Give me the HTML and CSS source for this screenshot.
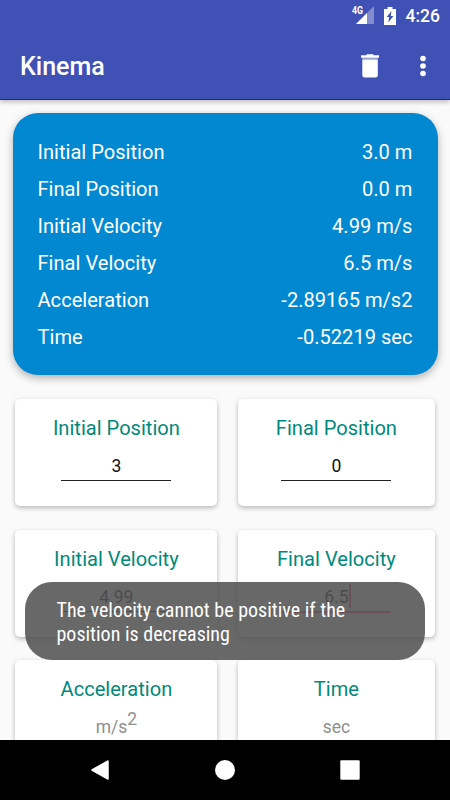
FILE: index.html
```html
<!DOCTYPE html>
<html lang="en">

<head>
    <meta charset="UTF-8">
    <meta name="viewport" content="width=device-width, initial-scale=1.0">
    <title>Kinema</title>
    <link rel="stylesheet" href="styles.css">
</head>

<body>
    <div class="phone">
        <header class="header">
            <div class="status">
                <svg class="signal" width="23" height="20" viewBox="0 0 23 20">
                    <path d="M22 1v18H4z" fill="#fff" fill-opacity=".35" />
                    <path d="M15 8v11H4z" fill="#fff" />
                    <path d="M0 0h12v9l-2 2H0z" fill="#3f51b5" />
                    <text x="0" y="9" textLength="11" lengthAdjust="spacingAndGlyphs">4G</text>
                </svg>
                <svg class="battery" width="12" height="18" viewBox="0 0 12 18">
                    <path d="M3.500 0h5v2H12v16H0V2h3.500z" fill="#fff" />
                    <path d="M7.500 4L2.700 10h2.500L4.300 15.500 9.400 9H6.700z" fill="#3f51b5" />
                </svg>
                <span class="clock">4:26</span>
            </div>
            <div class="toolbar">
                <h1>Kinema</h1>
                <svg class="trash" width="20" height="24" viewBox="0 0 20 24">
                    <path d="M1 1.200h5l1-1h6l1 1h5v2.600H1zM2.300 5.500h15.500v15.500a2.500 2.500 0 0 1-2.500 2.500H4.800a2.500 2.500 0 0 1-2.500-2.500z" fill="#fff" />
                    <path d="M2.300 3.800h15.500v1.700H2.300z" fill="#fff" fill-opacity=".5" />
                </svg>
                <svg class="more" width="6" height="22" viewBox="0 0 6 22">
                    <circle cx="3" cy="3.500" r="2.800" fill="#fff" />
                    <circle cx="3" cy="11" r="2.800" fill="#fff" />
                    <circle cx="3" cy="18.500" r="2.800" fill="#fff" />
                </svg>
            </div>
        </header>

        <main class="content">
            <div class="result">
                <div class="row"><span>Initial Position</span><span>3.0 m</span></div>
                <div class="row"><span>Final Position</span><span>0.0 m</span></div>
                <div class="row"><span>Initial Velocity</span><span>4.99 m/s</span></div>
                <div class="row"><span>Final Velocity</span><span>6.5 m/s</span></div>
                <div class="row"><span>Acceleration</span><span>-2.89165 m/s2</span></div>
                <div class="row"><span>Time</span><span>-0.52219 sec</span></div>
            </div>

            <div class="cards">
                <div class="card">
                    <h2>Initial Position</h2>
                    <div class="field">3</div>
                </div>
                <div class="card">
                    <h2>Final Position</h2>
                    <div class="field">0</div>
                </div>
                <div class="card">
                    <h2>Initial Velocity</h2>
                    <div class="field">4.99</div>
                </div>
                <div class="card">
                    <h2>Final Velocity</h2>
                    <div class="field focus">6.5<i class="cursor"></i></div>
                </div>
                <div class="card">
                    <h2>Acceleration</h2>
                    <div class="field hint">m/s<sup>2</sup></div>
                </div>
                <div class="card">
                    <h2>Time</h2>
                    <div class="field hint">sec</div>
                </div>
            </div>
        </main>

        <div class="toast">The velocity cannot be positive if the position is decreasing</div>

        <nav class="navbar">
            <svg width="20" height="22" viewBox="0 0 20 22">
                <path d="M18 2v18L2 11z" fill="#fff" stroke="#fff" stroke-width="1.500" stroke-linejoin="round" />
            </svg>
            <svg width="20" height="20" viewBox="0 0 20 20">
                <circle cx="10" cy="10" r="10" fill="#fff" />
            </svg>
            <svg width="20" height="20" viewBox="0 0 20 20">
                <rect x=".3" y=".3" width="19.400" height="19.400" rx="1" fill="#fff" />
            </svg>
        </nav>
    </div>
</body>

</html>
```
FILE: styles.css
```css
html,
body {
    margin: 0;
    padding: 0;
    background-color: #fafafa;
    font-family: Roboto, sans-serif;
}

.phone {
    position: relative;
    display: flex;
    flex-direction: column;
    width: 450px;
    height: 800px;
    overflow: hidden;
}

/* header */
.header {
    position: relative;
    z-index: 1;
    flex: none;
    box-sizing: border-box;
    height: 100px;
    color: #fff;
    background-color: #3f51b5;
    border-bottom: 1px solid #12289b;
    box-shadow: 0 2px 5px rgba(0, 0, 0, .25);
}

.status {
    display: flex;
    justify-content: flex-end;
    align-items: center;
    height: 31px;
    padding-right: 10px;
}

.signal text {
    font-size: 10px;
    font-weight: 700;
    fill: #fff;
}

.signal {
    margin: -2px 9px 0 0;
}

.battery {
    margin-right: 9.5px;
}

.clock {
    padding-top: 1px;
    font-size: 17.5px;
    font-weight: 500;
    line-height: 30px;
}

.toolbar {
    display: flex;
    align-items: center;
    height: 69px;
    padding: 0 24.5px 0 20px;
}

.toolbar h1 {
    flex: 1;
    margin: 0;
    padding-top: 2px;
    font-size: 25px;
    font-weight: 500;
    line-height: 67px;
}

.trash {
    margin-right: 39.5px;
}

/* result panel */
.content {
    flex: 1;
    min-height: 0;
    padding: 12.5px 12.5px 0;
    overflow: hidden;
}

.result {
    box-sizing: border-box;
    height: 262.5px;
    padding: 21px 25px;
    color: #fff;
    background-color: #0288d1;
    border-radius: 25px;
    box-shadow: 0 3px 8px rgba(0, 0, 0, .3);
}

.row {
    display: flex;
    justify-content: space-between;
    font-size: 20.1px;
    line-height: 37.1px;
}

/* input cards */
.cards {
    display: grid;
    grid-template-columns: 202px 197px;
    grid-auto-rows: 107px;
    gap: 23.5px 20.5px;
    padding: 24px 2px 0 2.9px;
}

.card {
    box-sizing: border-box;
    padding-top: 13px;
    text-align: center;
    background-color: #fff;
    border-radius: 5px;
    box-shadow: 0 2px 5px rgba(0, 0, 0, .27);
}

.card h2 {
    margin: 0 -1px 0 -1px;
    color: #00897b;
    font-size: 20.1px;
    font-weight: 400;
    line-height: 32px;
}

.field {
    box-sizing: border-box;
    width: 110px;
    height: 37px;
    margin: 0 auto;
    color: #111;
    font-size: 17.5px;
    line-height: 44px;
    border-bottom: 1px solid #222;
}

.field.focus {
    height: 38px;
    border-bottom: 2px solid #ff4081;
}

.field.hint {
    color: #8f8f8f;
}

.field sup {
    font-size: 17.5px;
    line-height: 0;
    vertical-align: 8px;
}

.cursor {
    display: inline-block;
    width: 2px;
    height: 24px;
    margin-right: -2px;
    vertical-align: -5px;
    background-color: #ff4081;
}

/* toast */
.toast {
    position: absolute;
    z-index: 2;
    left: 25px;
    top: 582px;
    box-sizing: border-box;
    width: 400px;
    height: 78px;
    padding: 16px 31.5px;
    color: #fff;
    font-family: "Roboto Condensed", Roboto, sans-serif;
    font-size: 20px;
    line-height: 24px;
    background-color: rgba(83, 83, 83, .88);
    border-radius: 27px;
}

/* navigation bar */
.navbar {
    z-index: 1;
    display: flex;
    flex: none;
    justify-content: space-between;
    align-items: center;
    height: 60px;
    padding: 0 90px;
    background-color: #000;
}
```
